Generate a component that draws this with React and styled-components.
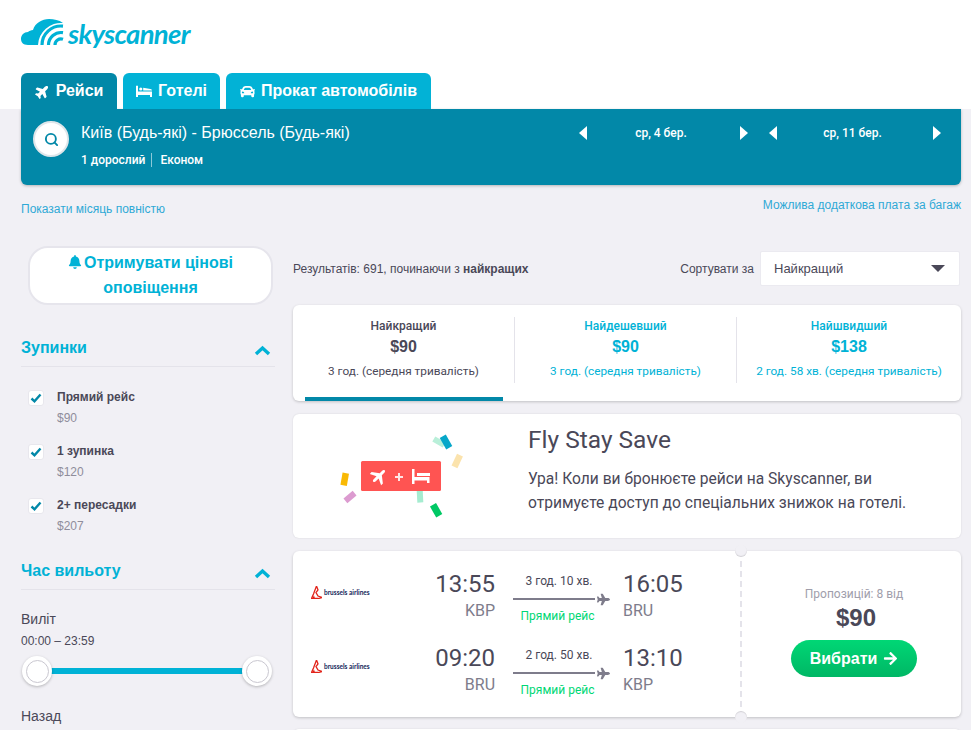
import React from 'react';
import styled, { createGlobalStyle } from 'styled-components';
import { FaBell, FaCar, FaPlane, FaArrowRight } from 'react-icons/fa';
import { Search } from 'lucide-react';

const GlobalStyle = createGlobalStyle`
  html, body {
    margin: 0;
    background: #f1f0f5;
    font-family: Roboto, "Liberation Sans", Arial, sans-serif;
    color: #4a4858;
  }
  * { box-sizing: border-box; }
`;

const Page = styled.div`
  height: 730px;
  overflow: hidden;
`;

const Header = styled.div`
  background: #fff;
  height: 109px;
  padding: 18px 0 0 21px;
  display: flex;
  flex-direction: column;
`;

const Logo = styled.div`
  display: flex;
  align-items: center;
  height: 30px;
  gap: 1px;
  color: #00b2d6;
  font-family: Lato, "Open Sans", sans-serif;
  font-style: italic;
  font-weight: 700;
  font-size: 27.5px;
  letter-spacing: -0.7px;
`;

const Tabs = styled.div`
  margin-top: 25px;
  display: flex;
  gap: 6px;
`;

const Tab = styled.div`
  height: 36px;
  width: ${(p) => p.$w}px;
  background: ${(p) => (p.$active ? '#0288a8' : '#02b2d6')};
  border-radius: 6px 6px 0 0;
  color: #fff;
  display: flex;
  align-items: center;
  justify-content: center;
  gap: 6px;
  font: bold 16px "Liberation Sans", Arial, sans-serif;
`;

const Content = styled.div`
  padding: 0 10px 0 21px;
`;

const SearchPanel = styled.div`
  height: 76px;
  background: #0288a8;
  border-radius: 0 0 6px 6px;
  box-shadow: 0 1px 3px rgba(0, 0, 0, 0.25);
  padding: 12px 0 0 12px;
  display: flex;
  color: #fff;
`;

const SearchButton = styled.div`
  width: 36px;
  height: 36px;
  border-radius: 50%;
  background: #fff;
  border: 2px solid #dfe6ea;
  display: flex;
  align-items: center;
  justify-content: center;
  color: #0288a8;
`;

const Route = styled.div`
  margin-left: 12px;
  width: 470px;
`;

const RouteTitle = styled.div`
  font: 16px/1 "Liberation Sans", Arial, sans-serif;
  margin-top: 4px;
`;

const RouteMeta = styled.div`
  display: flex;
  margin-top: 12px;
  font: 500 12px/14px Roboto, sans-serif;
`;

const MetaItem = styled.span`
  padding-right: 6px;
  & + & {
    padding-left: 8px;
    border-left: 1px solid rgba(255, 255, 255, 0.55);
  }
`;

const DateBox = styled.div`
  width: ${(p) => p.$w}px;
  height: 24px;
  display: flex;
  align-items: center;
  justify-content: space-between;
  font: 500 12px Roboto, sans-serif;
`;

const DateLabel = styled.span`
  margin-right: 5px;
`;

const Dates = styled.div`
  display: flex;
  margin-left: 28px;
  gap: 21px;
`;

const Arrow = styled.span`
  width: 0;
  height: 0;
  border-top: 7px solid transparent;
  border-bottom: 7px solid transparent;
  ${(p) => (p.$left ? 'border-right: 8px solid #fff;' : 'border-left: 8px solid #fff;')}
`;

const LinkRow = styled.div`
  height: 47px;
  display: flex;
  justify-content: space-between;
  color: #2fa9d6;
  font: 12px "Liberation Sans", Arial, sans-serif;
`;

const LeftLink = styled.span`
  margin-top: 17px;
`;

const RightLink = styled.span`
  margin-top: 13px;
`;

const Columns = styled.div`
  margin-top: 14px;
  display: flex;
  gap: 18px;
  align-items: flex-start;
`;

const Sidebar = styled.div`
  width: 254px;
  flex-shrink: 0;
`;

const AlertButton = styled.div`
  width: 245px;
  height: 59px;
  margin-left: 7px;
  background: #fff;
  border: 2px solid #e6e5ec;
  border-radius: 20px;
  color: #00b2d6;
  text-align: center;
  font: bold 16px/25px "Liberation Sans", Arial, sans-serif;
  padding-top: 2px;
  svg {
    font-size: 14px;
    vertical-align: -1px;
    margin-right: 2px;
  }
`;

const FilterHeader = styled.div`
  height: ${(p) => p.$h || 62}px;
  padding-bottom: 8px;
  border-bottom: 1px solid #e4e3ea;
  display: flex;
  align-items: flex-end;
  justify-content: space-between;
  color: #00b2d6;
  font: bold 16px/20px "Liberation Sans", Arial, sans-serif;
  svg {
    margin: 0 4px 2px 0;
  }
`;

const Stops = styled.div`
  padding: 23px 0 0 7px;
  display: flex;
  flex-direction: column;
  gap: 17px;
`;

const StopRow = styled.div`
  display: flex;
  gap: 13px;
  height: 37px;
`;

const CheckBox = styled.div`
  width: 16px;
  height: 16px;
  background: #fff;
  border-radius: 3px;
  border: 1px solid #e8e7ed;
  display: flex;
  align-items: center;
  justify-content: center;
`;

const StopLabel = styled.div`
  font: bold 12px/14px "Liberation Sans", Arial, sans-serif;
`;

const StopPrice = styled.div`
  margin-top: 7px;
  font: 12px/14px "Liberation Sans", Arial, sans-serif;
  color: #8f8d9b;
`;

const TimeLabel = styled.div`
  margin-top: ${(p) => p.$mt}px;
  font: 14px/16px "Liberation Sans", Arial, sans-serif;
`;

const TimeRange = styled.div`
  margin-top: 7px;
  font: 12px/14px "Liberation Sans", Arial, sans-serif;
`;

const Slider = styled.div`
  position: relative;
  height: 30px;
  margin: 8px 2px 0 2px;
  display: flex;
  align-items: center;
`;

const SliderTrack = styled.div`
  width: 100%;
  height: 6px;
  background: #00b2d6;
  margin: 0 14px;
`;

const Knob = styled.div`
  position: absolute;
  top: 0;
  ${(p) => (p.$right ? 'right: 1px;' : 'left: -1px;')}
  width: 30px;
  height: 30px;
  border-radius: 50%;
  background: #fff;
  box-shadow: 0 1px 3px rgba(0, 0, 0, 0.25);
  display: flex;
  align-items: center;
  justify-content: center;
  &::after {
    content: '';
    width: 21px;
    height: 21px;
    border-radius: 50%;
    border: 1px solid #c9c7d0;
  }
`;

const Main = styled.div`
  flex: 1;
  min-width: 0;
`;

const ResultsBar = styled.div`
  height: 35px;
  margin-top: 5px;
  display: flex;
  align-items: center;
  font: 12px "Liberation Sans", Arial, sans-serif;
`;

const ResultsText = styled.div`
  flex: 1;
  b { font-weight: bold; }
`;

const SortSelect = styled.div`
  width: 200px;
  height: 35px;
  margin: 0 1px 0 6px;
  background: #fff;
  border-radius: 2px;
  border: 1px solid #ebeaf0;
  padding: 0 14px 0 13px;
  display: flex;
  align-items: center;
  justify-content: space-between;
  font-size: 13px;
`;

const Caret = styled.span`
  width: 0;
  height: 0;
  border-left: 7px solid transparent;
  border-right: 7px solid transparent;
  border-top: 7px solid #4a4858;
`;

const Card = styled.div`
  background: #fff;
  border-radius: 6px;
  box-shadow: 0 1px 3px rgba(0, 0, 0, 0.2);
`;

const SortCard = styled(Card)`
  height: 96px;
  margin-top: 19px;
  display: grid;
  grid-template-columns: 222px 222px 1fr;
  padding: 12px 0 0 0;
  position: relative;
`;

const SortOption = styled.div`
  height: 66px;
  text-align: center;
  color: ${(p) => (p.$active ? '#4a4858' : '#00b2d6')};
  ${(p) => !p.$last && 'border-right: 1px solid #e4e3ea;'}
  padding-top: 2px;
`;

const OptionTitle = styled.div`
  font: 500 12px/14px Roboto, sans-serif;
`;

const OptionPrice = styled.div`
  margin-top: 4px;
  font: bold 16px/20px "Liberation Sans", Arial, sans-serif;
`;

const OptionTime = styled.div`
  margin-top: 7px;
  font: 11.8px/14px Roboto, sans-serif;
`;

const ActiveBar = styled.div`
  position: absolute;
  left: 12px;
  bottom: 0;
  width: 198px;
  height: 4px;
  background: #0288a8;
`;

const PromoCard = styled(Card)`
  height: 124px;
  margin-top: 13px;
  display: flex;
  box-shadow: 0 0 2px rgba(0, 0, 0, 0.12);
`;

const PromoArt = styled.div`
  width: 235px;
  padding: 11px 0 0 7px;
`;

const PromoText = styled.div`
  padding-top: 12px;
`;

const PromoTitle = styled.div`
  font: 24.5px/28px Roboto, sans-serif;
`;

const PromoBody = styled.div`
  margin-top: 13px;
  font: 15.6px/24px Roboto, sans-serif;
`;

const FlightCard = styled(Card)`
  position: relative;
  height: 166px;
  margin-top: 13px;
  display: flex;
`;

const Legs = styled.div`
  width: 449px;
  padding: 19px 0 0 18px;
  border-right: 2px dashed #e4e3ea;
  display: flex;
  flex-direction: column;
  gap: 10px;
`;

const Leg = styled.div`
  height: 64px;
  display: grid;
  grid-template-columns: 60px 124px 128px 1fr;
  align-items: start;
`;

const Notch = styled.span`
  position: absolute;
  left: 442px;
  ${(p) => (p.$bottom ? 'bottom: -6px;' : 'top: -6px;')}
  width: 12px;
  height: 12px;
  border-radius: 50%;
  background: #f1f0f5;
  box-shadow: inset 0 ${(p) => (p.$bottom ? '1px' : '-1px')} 1px rgba(0, 0, 0, 0.12);
`;

const Airline = styled.div`
  display: flex;
  align-items: center;
  gap: 2px;
  height: 16px;
  margin-top: 14px;
  color: #14265a;
  font: bold 6.5px Lato, sans-serif;
  white-space: nowrap;
`;

const Stamp = styled.div`
  text-align: ${(p) => p.$align};
`;

const Clock = styled.div`
  font: 24px/28px Roboto, sans-serif;
`;

const Iata = styled.div`
  margin-top: 3px;
  font: 16px/20px Roboto, sans-serif;
  color: #7e7c8b;
`;

const LegRoute = styled.div`
  margin-left: 18px;
  padding-top: 4px;
  width: 98px;
  text-align: center;
`;

const Duration = styled.div`
  font: 12px/14px Roboto, sans-serif;
  margin-right: 6px;
`;

const RouteLine = styled.div`
  margin-top: 4px;
  height: 14px;
  display: flex;
  align-items: center;
  gap: 2px;
  color: #7e7c8b;
  svg { font-size: 13px; flex-shrink: 0; }
`;

const LineBar = styled.span`
  width: 82px;
  height: 2px;
  background: #7e7c8b;
`;

const Direct = styled.div`
  margin-top: 3px;
  margin-right: 9px;
  color: #00d775;
  font: 12px/14px Roboto, sans-serif;
`;

const PriceBox = styled.div`
  flex: 1;
  display: flex;
  flex-direction: column;
  align-items: center;
  padding-top: 36px;
  padding-left: 5px;
`;

const Offers = styled.div`
  font: 12px/14px Roboto, sans-serif;
  color: #a09eab;
`;

const Price = styled.div`
  margin: 2px 0 0 4px;
  font: bold 24px/30px "Liberation Sans", Arial, sans-serif;
`;

const SelectButton = styled.div`
  margin-top: 7px;
  width: 126px;
  height: 37px;
  border-radius: 19px;
  background: linear-gradient(#00d775, #00b765);
  color: #fff;
  display: flex;
  align-items: center;
  justify-content: center;
  gap: 6px;
  font: bold 16px "Liberation Sans", Arial, sans-serif;
  svg { font-size: 15px; }
`;

const NextCard = styled(Card)`
  height: 40px;
  margin-top: 12px;
`;

const LogoMark = () => (
  <svg width="46" height="30" viewBox="0 0 46 30" fill="none">
    <path
      d="M7 27C2 27 0 24 0 21C0 17 3 14 7 14C8 13 10 12 12 12C14 5 21 1 28 1C33 1 38 2 42 5A23 23 0 0 0 17 27Z"
      fill="#00b2d6"
    />
    <path d="M21 27A19 19 0 0 1 42 8.100" stroke="#00b2d6" strokeWidth="3.200" />
    <path d="M27.500 27A12.500 12.500 0 0 1 42 14.700" stroke="#00b2d6" strokeWidth="3.200" />
    <path d="M34 27A6 6 0 0 1 42 21.300" stroke="#00b2d6" strokeWidth="3.200" />
  </svg>
);

const BedOutline = ({ size = 16, color = '#fff' }) => (
  <svg width={size} height={size * 0.8} viewBox="0 0 20 16" fill={color}>
    <path d="M0 1h2.500v7H20v7h-2.500v-2.500h-15V15H0z" />
    <circle cx="6" cy="5" r="2" />
    <path d="M9 3.500l9 1.500c1.200.3 2 1 2 2H9z" />
  </svg>
);

const Check = () => (
  <svg width="12" height="10" viewBox="0 0 12 10" fill="none">
    <path d="M1.500 5.500L4.500 8.300 10.500 1.500" stroke="#0288a8" strokeWidth="2.400" />
  </svg>
);

const ChevronUp = () => (
  <svg width="17" height="11" viewBox="0 0 17 11" fill="none">
    <path d="M2 9L8.500 3 15 9" stroke="#00b2d6" strokeWidth="3.400" />
  </svg>
);

const AirlineMark = () => (
  <svg width="11" height="13" viewBox="0 0 11 13">
    <path d="M5.500 0l1.500 4-2 2.500L7 10l4 1.500-3.500 1H.5l2-4.500z" fill="none" stroke="#e2231a" strokeWidth="1.300" />
    <path d="M1 12.500l2-3 1 3z" fill="#e2231a" />
  </svg>
);

const Confetti = () => (
  <svg width="180" height="100" viewBox="0 0 180 100">
    <rect x="136" y="11" width="6" height="12" fill="#b9efd9" transform="rotate(-60 139 17)" />
    <rect x="142.500" y="10.500" width="7" height="13" fill="#06a7c9" transform="rotate(-30 146 17)" />
    <rect x="154" y="29.500" width="6.500" height="13" fill="#fbe3ad" transform="rotate(25 157 36)" />
    <rect x="41.500" y="48" width="6.500" height="12.500" fill="#f9b905" transform="rotate(10 44.700 54)" />
    <rect x="47" y="66" width="6" height="12" fill="#dc9bd0" transform="rotate(50 50 72)" />
    <rect x="117" y="64.500" width="6" height="13" fill="#a5ecd0" transform="rotate(-3 120 71)" />
    <rect x="132.500" y="79" width="7" height="12.500" fill="#00c864" transform="rotate(-30 136 85)" />
    <rect x="61" y="36" width="80" height="30" rx="1.500" fill="#ff5452" />
    <g transform="translate(71 43) rotate(-45 8 8)">
      <path d="M0 8c0-1 1-1.500 2-1.500h4L3 0h2.500l5 6.500H14c1 0 2 .6 2 1.500s-1 1.500-2 1.500h-3.500l-5 6.500H3l3-6.500H2C1 9.500 0 9 0 8z" fill="#fff" />
    </g>
    <path d="M95 51h3v-3h2v3h3v2h-3v3h-2v-3h-3z" fill="#fff" opacity="0.85" />
    <g transform="translate(112 44)" fill="#fff">
      <path d="M0 0h2.500v8h15v6H15v-2.500H2.500V15H0z" />
      <rect x="5" y="4" width="13" height="3" />
    </g>
  </svg>
);

const stops = [
  { label: 'Прямий рейс', price: '$90' },
  { label: '1 зупинка', price: '$120' },
  { label: '2+ пересадки', price: '$207' },
];

const sortOptions = [
  { title: 'Найкращий', price: '$90', time: '3 год. (середня тривалість)', active: true },
  { title: 'Найдешевший', price: '$90', time: '3 год. (середня тривалість)' },
  { title: 'Найшвидший', price: '$138', time: '2 год. 58 хв. (середня тривалість)', last: true },
];

const legs = [
  { dep: '13:55', from: 'KBP', dur: '3 год. 10 хв.', arr: '16:05', to: 'BRU' },
  { dep: '09:20', from: 'BRU', dur: '2 год. 50 хв.', arr: '13:10', to: 'KBP' },
];

const App = () => {
  return (
    <Page>
      <GlobalStyle />
      <Header>
        <Logo>
          <LogoMark />
          skyscanner
        </Logo>
        <Tabs>
          <Tab $w={96} $active>
            <FaPlane size={15} style={{ transform: 'rotate(-45deg)' }} />
            Рейси
          </Tab>
          <Tab $w={97}>
            <BedOutline />
            Готелі
          </Tab>
          <Tab $w={205}>
            <FaCar size={15} />
            Прокат автомобілів
          </Tab>
        </Tabs>
      </Header>
      <Content>
        <SearchPanel>
          <SearchButton>
            <Search size={15} strokeWidth={3} />
          </SearchButton>
          <Route>
            <RouteTitle>Київ (Будь-які) - Брюссель (Будь-які)</RouteTitle>
            <RouteMeta>
              <MetaItem>1 дорослий</MetaItem>
              <MetaItem>Економ</MetaItem>
            </RouteMeta>
          </Route>
          <Dates>
            <DateBox $w={169}>
              <Arrow $left />
              <DateLabel>ср, 4 бер.</DateLabel>
              <Arrow />
            </DateBox>
            <DateBox $w={172}>
              <Arrow $left />
              <DateLabel>ср, 11 бер.</DateLabel>
              <Arrow />
            </DateBox>
          </Dates>
        </SearchPanel>
        <LinkRow>
          <LeftLink>Показати місяць повністю</LeftLink>
          <RightLink>Можлива додаткова плата за багаж</RightLink>
        </LinkRow>
        <Columns>
          <Sidebar>
            <AlertButton>
              <FaBell />
              Отримувати цінові оповіщення
            </AlertButton>
            <FilterHeader>
              Зупинки
              <ChevronUp />
            </FilterHeader>
            <Stops>
              {stops.map((stop) => (
                <StopRow key={stop.label}>
                  <CheckBox>
                    <Check />
                  </CheckBox>
                  <div>
                    <StopLabel>{stop.label}</StopLabel>
                    <StopPrice>{stop.price}</StopPrice>
                  </div>
                </StopRow>
              ))}
            </Stops>
            <FilterHeader $h={55}>
              Час вильоту
              <ChevronUp />
            </FilterHeader>
            <TimeLabel $mt={21}>Виліт</TimeLabel>
            <TimeRange>00:00 – 23:59</TimeRange>
            <Slider>
              <SliderTrack />
              <Knob />
              <Knob $right />
            </Slider>
            <TimeLabel $mt={22}>Назад</TimeLabel>
          </Sidebar>
          <Main>
            <ResultsBar>
              <ResultsText>
                Результатів: 691, починаючи з <b>найкращих</b>
              </ResultsText>
              Сортувати за
              <SortSelect>
                Найкращий
                <Caret />
              </SortSelect>
            </ResultsBar>
            <SortCard>
              {sortOptions.map((option) => (
                <SortOption key={option.title} $active={option.active} $last={option.last}>
                  <OptionTitle>{option.title}</OptionTitle>
                  <OptionPrice>{option.price}</OptionPrice>
                  <OptionTime>{option.time}</OptionTime>
                </SortOption>
              ))}
              <ActiveBar />
            </SortCard>
            <PromoCard>
              <PromoArt>
                <Confetti />
              </PromoArt>
              <PromoText>
                <PromoTitle>Fly Stay Save</PromoTitle>
                <PromoBody>
                  Ура! Коли ви бронюєте рейси на Skyscanner, ви
                  <br />
                  отримуєте доступ до спеціальних знижок на готелі.
                </PromoBody>
              </PromoText>
            </PromoCard>
            <FlightCard>
              <Notch />
              <Notch $bottom />
              <Legs>
                {legs.map((leg) => (
                  <Leg key={leg.dep}>
                    <Airline>
                      <AirlineMark />
                      brussels airlines
                    </Airline>
                    <Stamp $align="right">
                      <Clock>{leg.dep}</Clock>
                      <Iata>{leg.from}</Iata>
                    </Stamp>
                    <LegRoute>
                      <Duration>{leg.dur}</Duration>
                      <RouteLine>
                        <LineBar />
                        <FaPlane />
                      </RouteLine>
                      <Direct>Прямий рейс</Direct>
                    </LegRoute>
                    <Stamp $align="left">
                      <Clock>{leg.arr}</Clock>
                      <Iata>{leg.to}</Iata>
                    </Stamp>
                  </Leg>
                ))}
              </Legs>
              <PriceBox>
                <Offers>Пропозицій: 8 від</Offers>
                <Price>$90</Price>
                <SelectButton>
                  Вибрати
                  <FaArrowRight />
                </SelectButton>
              </PriceBox>
            </FlightCard>
            <NextCard />
          </Main>
        </Columns>
      </Content>
    </Page>
  );
};

export default App;
